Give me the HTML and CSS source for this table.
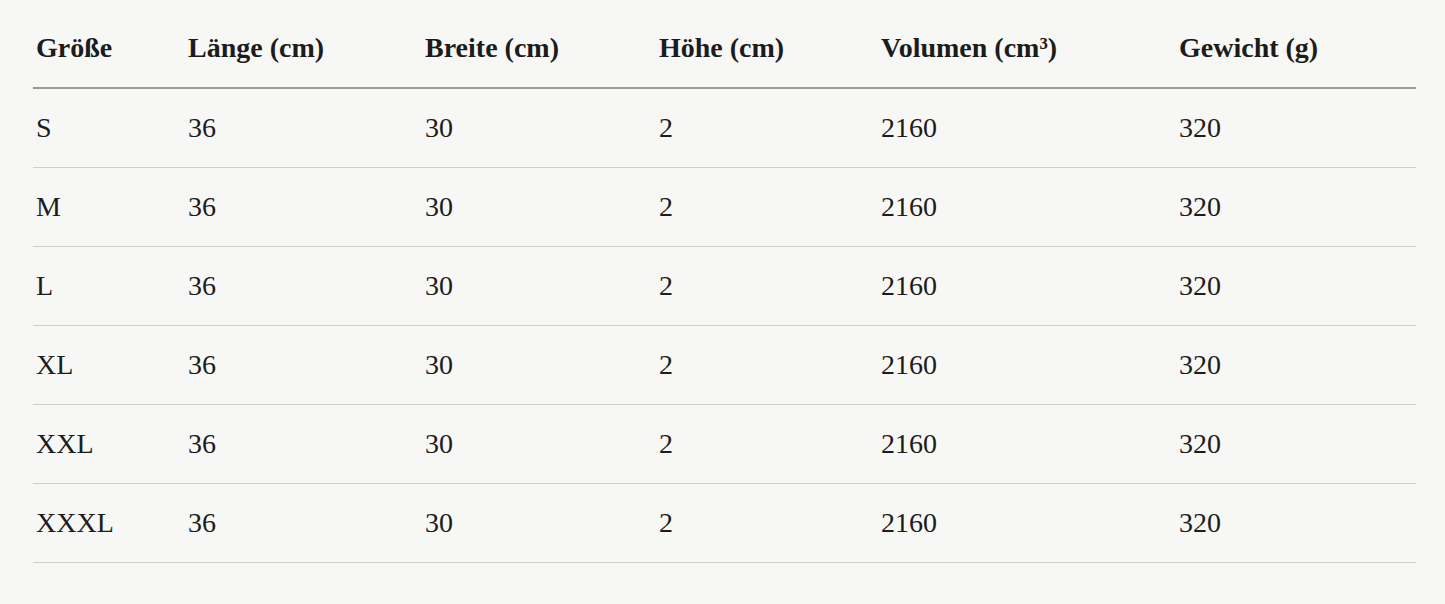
FILE: index.html
```html
<!DOCTYPE html>
<html lang="de">
<head>
<meta charset="utf-8">
<title>Größentabelle</title>
<link rel="stylesheet" href="styles.css">
</head>
<body>
<div class="page">
<table class="sizes">
<colgroup>
<col class="c1"><col class="c2"><col class="c3"><col class="c4"><col class="c5"><col class="c6">
</colgroup>
<thead>
<tr><th>Größe</th><th>Länge (cm)</th><th>Breite (cm)</th><th>Höhe (cm)</th><th>Volumen (cm³)</th><th>Gewicht (g)</th></tr>
</thead>
<tbody>
<tr><td>S</td><td>36</td><td>30</td><td>2</td><td>2160</td><td>320</td></tr>
<tr><td>M</td><td>36</td><td>30</td><td>2</td><td>2160</td><td>320</td></tr>
<tr><td>L</td><td>36</td><td>30</td><td>2</td><td>2160</td><td>320</td></tr>
<tr><td>XL</td><td>36</td><td>30</td><td>2</td><td>2160</td><td>320</td></tr>
<tr><td>XXL</td><td>36</td><td>30</td><td>2</td><td>2160</td><td>320</td></tr>
<tr><td>XXXL</td><td>36</td><td>30</td><td>2</td><td>2160</td><td>320</td></tr>
</tbody>
</table>
</div>
</body>
</html>
```

FILE: styles.css
```css
html, body {
  margin: 0;
  padding: 0;
  background: #f7f7f5;
}
.page {
  padding: 9px 29px 0 33px;
}
.sizes {
  width: 100%;
  border-collapse: collapse;
  table-layout: fixed;
  font-family: "Liberation Serif", "DejaVu Serif", serif;
  font-size: 28px;
  color: #1c1c1c;
}
.c1 { width: 152px; }
.c2 { width: 237px; }
.c3 { width: 234px; }
.c4 { width: 222px; }
.c5 { width: 298px; }
.c6 { width: auto; }
.sizes th,
.sizes td {
  text-align: left;
  padding: 0 0 0 3px;
  height: 78px;
  vertical-align: middle;
}
.sizes th {
  font-weight: 700;
  border-bottom: 2px solid #9a9a9a;
}
.sizes td {
  font-weight: 400;
  border-bottom: 1px solid #cfcfcf;
}
```
